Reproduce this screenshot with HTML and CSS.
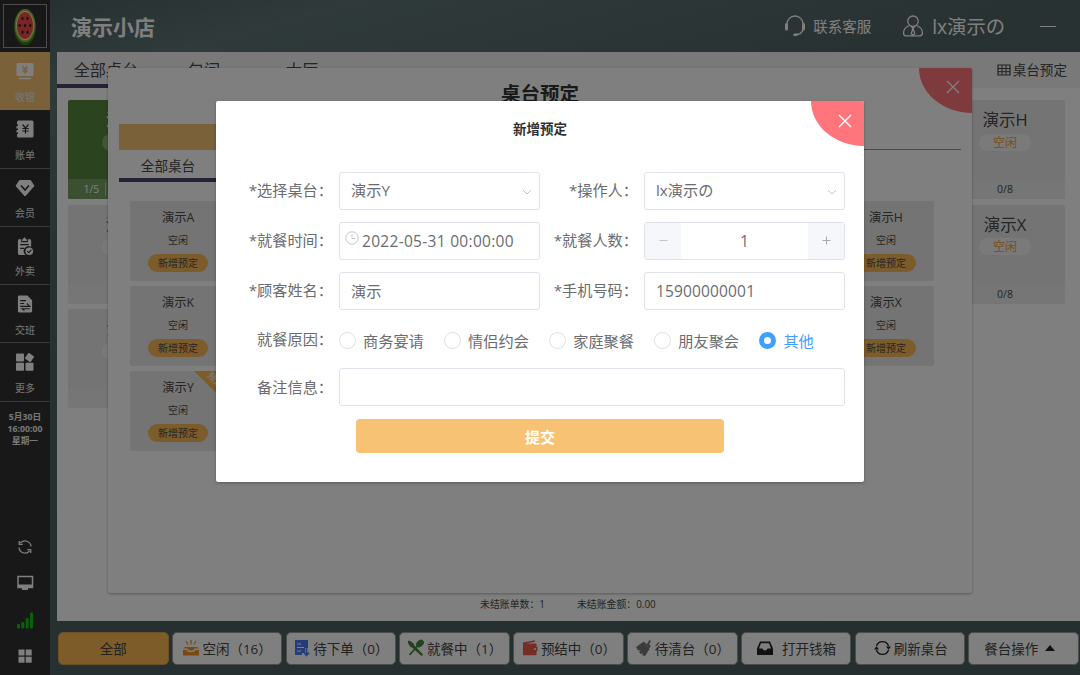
FILE: index.html
```html
<!DOCTYPE html>
<html lang="zh-CN">

<head>
    <meta charset="UTF-8">
    <meta name="viewport" content="width=device-width, initial-scale=1.0">
    <title>演示小店</title>
    <link rel="stylesheet" href="styles.css">
</head>

<body>
    <div class="app">
        <aside class="sidebar">
            <div class="logo">
                <svg width="40" height="40" viewBox="0 0 40 40">
                    <ellipse cx="20" cy="21" rx="11" ry="18" fill="#3f7a16" />
                    <ellipse cx="20" cy="19.5" rx="10.3" ry="16.5" fill="#8fbf45" />
                    <ellipse cx="20" cy="19.5" rx="9" ry="14.5" fill="#fff0c8" />
                    <ellipse cx="20" cy="19.5" rx="8.2" ry="13.5" fill="#f04c46" />
                    <g fill="#222">
                        <ellipse cx="17.5" cy="12.5" rx="1" ry="1.7" />
                        <ellipse cx="22.5" cy="12.5" rx="1" ry="1.7" />
                        <ellipse cx="14.7" cy="19.5" rx="1.3" ry="1.3" />
                        <ellipse cx="20" cy="19.5" rx="1.1" ry="1.5" />
                        <ellipse cx="25.3" cy="19.5" rx="1.3" ry="1.3" />
                        <ellipse cx="17.5" cy="26.2" rx="1" ry="1.7" />
                        <ellipse cx="22.5" cy="26.2" rx="1" ry="1.7" />
                    </g>
                </svg>
            </div>
            <nav class="menu">
                <a class="menu-item active">
                    <svg width="18" height="18" viewBox="0 0 18 18">
                        <rect x="0.5" y="1" width="17" height="13" rx="1.5" fill="#fff" />
                        <path d="M3 16.5h12" stroke="#fff" stroke-width="1.5" />
                        <path d="M6.5 4l2.5 3 2.5-3M6.3 7.3h5.4M6.3 9.5h5.4M9 7v5" fill="none" stroke="#f7c274" stroke-width="1.3" />
                    </svg>
                    <span>收银</span>
                </a>
                <a class="menu-item">
                    <svg width="18" height="18" viewBox="0 0 18 18">
                        <path d="M2.5 0.5h13.5a1.5 1.5 0 0 1 1.5 1.5v14a1.5 1.5 0 0 1-1.5 1.5H2.5a1.5 1.5 0 0 1-1.5-1.5v-2h1v-1.5H0.5V10H2V8.5H.5V6H2V4.5H1V2a1.5 1.5 0 0 1 1.5-1.5z" fill="#fff" />
                        <path d="M6.5 4.5L9.5 8l3-3.5M6.3 8.5h6.4M6.3 11h6.4M9.5 8v5.5" fill="none" stroke="#303030" stroke-width="1.2" />
                    </svg>
                    <span>账单</span>
                </a>
                <a class="menu-item">
                    <svg width="20" height="18" viewBox="0 0 20 18">
                        <path d="M4.5 1.5h11L19 7l-9 10L1 7z" fill="#fff" stroke="#fff" stroke-linejoin="round" />
                        <path d="M6 6.5l4 4.5 4-4.5" fill="none" stroke="#303030" stroke-width="1.6" />
                    </svg>
                    <span>会员</span>
                </a>
                <a class="menu-item">
                    <svg width="20" height="20" viewBox="0 0 18 19">
                        <path d="M3 2.5h2v3h7v-3h2a1.5 1.5 0 0 1 1.5 1.5v6.5a5 5 0 0 0-5.7 8.5H3A1.5 1.5 0 0 1 1.5 17.5V4A1.5 1.5 0 0 1 3 2.5z" fill="#fff" />
                        <path d="M6 3L8.5 0.3 11 3v1.2H6z" fill="#fff" />
                        <circle cx="13.5" cy="15" r="4" fill="#fff" />
                        <path d="M4 8h9M4 12h4M11.3 15l1.7 1.6 2.7-3" fill="none" stroke="#303030" stroke-width="1.2" />
                    </svg>
                    <span>外卖</span>
                </a>
                <a class="menu-item">
                    <svg width="18" height="19" viewBox="0 0 18 19">
                        <path d="M3 0.5h8.5L16.5 5.5V17a1.5 1.5 0 0 1-1.5 1.5H3A1.5 1.5 0 0 1 1.5 17V2A1.5 1.5 0 0 1 3 .5z" fill="#fff" />
                        <path d="M4 6h6M4 9h4M4 12h10l-3-3M14 14.5H6l2.5 2" fill="none" stroke="#303030" stroke-width="1.2" />
                    </svg>
                    <span>交班</span>
                </a>
                <a class="menu-item">
                    <svg width="18" height="18" viewBox="0 0 18 18" fill="#fff">
                        <rect x="0" y="0.5" width="8" height="8" rx="0.8" />
                        <rect x="0" y="9.7" width="8" height="8" rx="0.8" />
                        <rect x="9.5" y="9.7" width="8" height="8" rx="0.8" />
                        <rect x="10" y="1" width="7" height="7" rx="0.8" transform="rotate(35 13.5 4.5)" />
                    </svg>
                    <span>更多</span>
                </a>
            </nav>
            <div class="clock">5月30日<br>16:00:00<br>星期一</div>
            <div class="tools">
                <svg width="16" height="16" viewBox="0 0 16 16" fill="none" stroke="#fff" stroke-width="1.3">
                    <path d="M3.5 4A6 6 0 0 1 14 7.5M12.5 12A6 6 0 0 1 2 8.5" />
                    <path d="M2.3 2v3.3h3.4M13.7 14v-3.3h-3.4" />
                </svg>
                <svg width="18" height="16" viewBox="0 0 18 16">
                    <path d="M2 1.5h14.5v11H2z" fill="none" stroke="#fff" stroke-width="1.5" />
                    <path d="M2 9.5h14.5v3H2zM6 13h6v2H6z" fill="#fff" />
                </svg>
                <svg width="16" height="17" viewBox="0 0 16 17" fill="#0fc40f">
                    <rect x="0" y="12" width="3" height="4.5" rx="1" />
                    <rect x="4.3" y="10" width="3" height="6.5" rx="1" />
                    <rect x="8.6" y="6" width="3" height="10.5" rx="1" />
                    <rect x="13" y="0.5" width="3" height="16" rx="1" />
                </svg>
                <svg width="14" height="14" viewBox="0 0 14 14" fill="#fff">
                    <rect x="0.5" y="0.5" width="6" height="6" />
                    <rect x="7.7" y="0.5" width="6" height="6" />
                    <rect x="0.5" y="7.7" width="6" height="6" />
                    <rect x="7.7" y="7.7" width="6" height="6" />
                </svg>
            </div>
        </aside>

        <div class="main">
            <header class="header">
                <h1 class="shop-name">演示小店</h1>
                <div class="service">
                    <svg width="22" height="22" viewBox="0 0 22 22" fill="none" stroke="#fff">
                        <path d="M3 9a8 8 0 0 1 16 0M19 13c0 3-2 6-6 6.5" stroke-width="1.3" />
                        <path d="M2.5 9.5v4.5M19.5 9.5v4.5" stroke-width="3" stroke-linecap="round" />
                        <path d="M10.5 19.7h2" stroke-width="2.5" stroke-linecap="round" />
                    </svg>
                    <span>联系客服</span>
                </div>
                <div class="user">
                    <svg width="22" height="22" viewBox="0 0 22 22" fill="none" stroke="#fff" stroke-width="1.3">
                        <circle cx="11" cy="6.2" r="5.2" />
                        <path d="M7.5 10.5C3.5 12 1.5 15 1.5 18c0 2 .8 2.8 2.5 2.8h14c1.7 0 2.5-.8 2.5-2.8 0-3-2-6-6-7.5" />
                        <path d="M9 11l2 2.5 2-2.5M11 13.5l-1.8 5 1.8 2 1.8-2z" />
                    </svg>
                    <span>lx演示の</span>
                </div>
                <span class="minimize"></span>
            </header>

            <section class="board">
                <div class="tabs">
                    <span class="tab active">全部桌台</span>
                    <span class="tab">包间</span>
                    <span class="tab">大厅</span>
                    <span class="reserve">
                        <svg width="14" height="12" viewBox="0 0 14 12" fill="none" stroke="#444">
                            <path d="M1 1h12v10H1z" stroke-width="1.2" />
                            <path d="M1 4.5h12M1 7.7h12M5 1v10M9 1v10" />
                        </svg>桌台预定</span>
                </div>
                <div class="tables">
                    <div class="table busy">
                        <div class="table-name">演示A</div>
                        <span class="state"></span>
                        <div class="seats"><span>1/5</span><i></i></div>
                    </div>
                    <div class="table last-col">
                        <div class="table-name">演示H</div>
                        <span class="state">空闲</span>
                        <div class="seats">0/8</div>
                    </div>
                    <div class="table">
                        <div class="table-name">演示K</div>
                        <span class="state"></span>
                        <div class="seats"></div>
                    </div>
                    <div class="table last-col">
                        <div class="table-name">演示X</div>
                        <span class="state">空闲</span>
                        <div class="seats">0/8</div>
                    </div>
                    <div class="table">
                        <div class="table-name">演示Y</div>
                        <span class="state"></span>
                        <div class="seats"></div>
                    </div>
                </div>
                <div class="summary">
                    <span>未结账单数：1</span>
                    <span>未结账金额：0.00</span>
                </div>
            </section>

            <footer class="filters">
                <button class="filter active">全部</button>
                <button class="filter">
                    <svg width="18" height="18" viewBox="0 0 18 18">
                        <path d="M1 9.5l2-1.5h12l2 1.5H12.5c-.5 3-6.5 3-7 0zM1 11h3.5c1.5 3 7.5 3 9 0H17v5.5H1z" fill="#f0962d" />
                        <path d="M9 1v4.5M4 2l2 3.5M14 2l-2 3.5" stroke="#f0962d" stroke-width="1.3" />
                    </svg>空闲（16）</button>
                <button class="filter">
                    <svg width="18" height="18" viewBox="0 0 18 18">
                        <path d="M2 1h13v8h-3v5H9v2H2z" fill="#4a7bee" />
                        <path d="M4 5h4M4 8.5h7M4 12h4" stroke="#fff" stroke-width="1.2" />
                        <path d="M13.5 9v6M11 13.5l2.5 3 2.5-3" fill="none" stroke="#4a7bee" stroke-width="1.6" />
                    </svg>待下单（0）</button>
                <button class="filter">
                    <svg width="18" height="18" viewBox="0 0 18 18">
                        <path d="M1 2c1-.8 5 .5 6.5 4.500L16 15.500 14.500 17 5 8.500C3 8 .5 4.500 1 2z" fill="#458638" />
                        <ellipse cx="13" cy="4.500" rx="4.400" ry="3.200" transform="rotate(-45 13 4.500)" fill="#458638" />
                        <path d="M10.500 7L2.500 16" stroke="#458638" stroke-width="1.800" />
                    </svg>就餐中（1）</button>
                <button class="filter">
                    <svg width="18" height="18" viewBox="0 0 18 18">
                        <path d="M2 3.500L14 1.300v1.500L5 4.500h10.500v11.700H2z" fill="#e85d4e" />
                        <rect x="11.500" y="7.500" width="5" height="5" rx="1" fill="#e85d4e" />
                        <circle cx="14" cy="10" r="1" fill="#fff" />
                    </svg>预结中（0）</button>
                <button class="filter">
                    <svg width="18" height="18" viewBox="0 0 18 18" fill="#777">
                        <path d="M1 8l8-5.500L14.500 10 10 17l-3-1 1-2-2.500 1L4 13l1.500-2L3 11.500z" />
                        <path d="M10 3.500l2 1.500L14.500 1 16 2l-2 3.500L16 7l-2 2.500z" />
                    </svg>待清台（0）</button>
                <button class="filter">
                    <svg class="wide" width="18" height="18" viewBox="0 0 18 18">
                        <path d="M4 2.500h10l3 7V16H1V9.500z" fill="#222" />
                        <path d="M5 4.200h8l2 5.300h-3.500c-.5 2.500-4.500 2.500-5 0H3z" fill="#fff" />
                    </svg>打开钱箱</button>
                <button class="filter refresh">
                    <svg width="17" height="18" viewBox="0 0 17 18">
                        <path d="M2.500 7A6.300 6.300 0 0 1 14.500 7M14.500 11A6.300 6.300 0 0 1 2.500 11" fill="none" stroke="#222" stroke-width="1.400" />
                        <path d="M0 10.500h5L2.500 7.200zM12 7.500h5l-2.500 3.300z" fill="#222" />
                    </svg>刷新桌台</button>
                <button class="filter more">餐台操作<i class="caret"></i></button>
            </footer>
        </div>
    </div>

    <!-- 桌台预定 -->
    <div class="dialog booking">
        <span class="close">
            <svg width="14" height="14" viewBox="0 0 14 14"><path d="M1 1l12 12M13 1L1 13" stroke="#fff" stroke-width="1.4" /></svg>
        </span>
        <h2 class="booking-title">桌台预定</h2>
        <div class="booking-bar"><span></span></div>
        <div class="booking-tab">全部桌台</div>
        <div class="booking-grid">
            <div class="slot"><b>演示A</b><span>空闲</span><em>新增预定</em></div>
            <div class="slot last-col"><b>演示H</b><span>空闲</span><em>新增预定</em></div>
            <div class="slot"><b>演示K</b><span>空闲</span><em>新增预定</em></div>
            <div class="slot last-col"><b>演示X</b><span>空闲</span><em>新增预定</em></div>
            <div class="slot"><i class="ribbon"><u>预定</u></i><b>演示Y</b><span>空闲</span><em>新增预定</em></div>
        </div>
    </div>

    <div class="mask"></div>

    <!-- 新增预定 -->
    <div class="dialog reserve-form">
        <span class="close">
            <svg width="14" height="14" viewBox="0 0 14 14"><path d="M1 1l12 12M13 1L1 13" stroke="#fff" stroke-width="1.4" /></svg>
        </span>
        <h3 class="form-title">新增预定</h3>
        <div class="form">
            <label>*选择桌台：</label>
            <div class="input">演示Y<svg class="arrow" width="10" height="6" viewBox="0 0 10 6"><path d="M1 1l4 4 4-4" fill="none" stroke="#c0c4cc" /></svg></div>
            <label>*操作人：</label>
            <div class="input">lx演示の<svg class="arrow" width="10" height="6" viewBox="0 0 10 6"><path d="M1 1l4 4 4-4" fill="none" stroke="#c0c4cc" /></svg></div>

            <label>*就餐时间：</label>
            <div class="input date">
                <svg width="14" height="14" viewBox="0 0 14 14" fill="none" stroke="#c0c4cc"><circle cx="7" cy="7" r="6.2" /><path d="M7 3v4.5h3.5" /></svg>
                <span>2022-05-31 00:00:00</span>
            </div>
            <label>*就餐人数：</label>
            <div class="input number">
                <span class="step"><svg width="9" height="9" viewBox="0 0 9 9"><path d="M0.5 4.5h8" stroke="#c0c4cc" /></svg></span>
                <span class="count">1</span>
                <span class="step"><svg width="9" height="9" viewBox="0 0 9 9"><path d="M0.5 4.5h8M4.5 .5v8" stroke="#a8abb2" /></svg></span>
            </div>

            <label>*顾客姓名：</label>
            <div class="input">演示</div>
            <label>*手机号码：</label>
            <div class="input digits">15900000001</div>

            <label class="reason">就餐原因：</label>
            <div class="radios">
                <span class="radio"><i></i>商务宴请</span>
                <span class="radio"><i></i>情侣约会</span>
                <span class="radio"><i></i>家庭聚餐</span>
                <span class="radio"><i></i>朋友聚会</span>
                <span class="radio checked"><i></i>其他</span>
            </div>

            <label class="remark-label">备注信息：</label>
            <div class="input remark"></div>
        </div>
        <button class="submit">提交</button>
    </div>
</body>

</html>
```
FILE: styles.css
```css
* {
    box-sizing: border-box;
}

body {
    margin: 0;
    width: 1080px;
    height: 675px;
    overflow: hidden;
    font-family: "Open Sans", "Noto Sans CJK SC", sans-serif;
    color: #4a4a4a;
}

svg {
    display: block;
    flex: none;
}

i, em, u {
    font-style: normal;
    text-decoration: none;
}

.app {
    display: flex;
    height: 675px;
    background: linear-gradient(165deg, #4d5f5f 0%, #5f7474 10%, #526464 30%, #4c5e5e 100%);
}

/* 左侧菜单 */
.sidebar {
    width: 50px;
    display: flex;
    flex-direction: column;
    background: #303030;
    color: #eee;
}

.logo {
    width: 44px;
    height: 44px;
    margin: 4px 3px;
    border: 1px solid #999;
    padding: 1px;
}

.menu-item {
    height: 58.3px;
    display: flex;
    flex-direction: column;
    align-items: center;
    padding-top: 10px;
    font-size: 10px;
    line-height: 14px;
    border-bottom: 1px solid #777;
}

.menu-item svg {
    height: 18px;
}

.menu-item span {
    margin-top: 9.5px;
}

.menu-item.active {
    background: #f7c274;
    border-bottom-color: #f7c274;
}

.clock {
    margin-top: 9px;
    text-align: center;
    font-size: 8.7px;
    font-weight: bold;
    line-height: 12px;
}

.tools {
    flex: 1;
    display: flex;
    flex-direction: column;
    align-items: center;
    justify-content: flex-end;
    gap: 20.5px;
    padding-bottom: 12px;
}

/* 顶部 */
.main {
    flex: 1;
    padding-left: 7px;
    display: flex;
    flex-direction: column;
}

.header {
    height: 52px;
    display: flex;
    align-items: center;
    padding: 0 24px 0 14px;
    color: #fff;
}

.shop-name {
    margin: 1px auto 0 0;
    font-size: 21px;
    line-height: 30px;
}

.service,
.user {
    display: flex;
    align-items: center;
}

.service span {
    margin-top: -2px;
}

.service {
    font-size: 14.5px;
    gap: 7px;
    margin-right: 31px;
}

.user {
    font-size: 19.3px;
    gap: 8px;
    margin-right: 35px;
}

.minimize {
    width: 16px;
    height: 1px;
    background: #fff;
}

/* 桌台 */
.board {
    height: 569px;
    background: #fff;
    display: flex;
    flex-direction: column;
}

.tabs {
    height: 36px;
    display: flex;
    background: #f3f3f3;
    font-size: 16.2px;
    line-height: 37px;
}

.tab {
    width: 98px;
    text-align: center;
}

.tab.active {
    border-bottom: 4px solid #4a4566;
}

.reserve {
    margin-left: auto;
    margin-right: 13px;
    height: 35px;
    display: flex;
    align-items: center;
    gap: 2px;
    font-size: 13.6px;
}

.tables {
    flex: 1;
    display: grid;
    grid-template-columns: repeat(8, 1fr);
    grid-auto-rows: 99.3px;
    gap: 5.3px;
    padding: 12px 15px 0 10.5px;
}

.last-col {
    grid-column: 8;
}

.table {
    display: flex;
    flex-direction: column;
    align-items: center;
    background: #e9e9e9;
    border-radius: 2px;
    overflow: hidden;
}

.table-name {
    margin-top: 7px;
    font-size: 16.5px;
    line-height: 26px;
}

.state {
    width: 52px;
    height: 17px;
    margin-top: 0.5px;
    border-radius: 9px;
    background: #f4f4f4;
    color: #f0a030;
    font-size: 12px;
    line-height: 17px;
    text-align: center;
}

.seats {
    width: 100%;
    height: 20px;
    margin-top: auto;
    background: #ececec;
    font-size: 10.5px;
    line-height: 21px;
    text-align: center;
}

.busy {
    background: #56883f;
    color: #fff;
}

.busy .state {
    background: #83ab72;
}

.busy .seats {
    display: flex;
    align-items: center;
    padding-left: 16px;
    gap: 6px;
    background: #74a062;
}

.busy .seats i {
    width: 1px;
    height: 14px;
    background: #b8d0ae;
}

.summary {
    display: flex;
    gap: 32px;
    padding: 0 0 9px 423px;
    font-size: 9.9px;
    line-height: 16px;
}

/* 底部按钮 */
.filters {
    display: grid;
    grid-template-columns: repeat(9, 1fr);
    gap: 3.1px;
    padding: 11px 1px 0 1px;
}

.filter {
    height: 33px;
    display: flex;
    align-items: center;
    justify-content: center;
    gap: 2px;
    padding: 0 0 2px;
    border: 1px solid #999;
    border-radius: 5px;
    background: #fff;
    color: #444;
    font-family: inherit;
    font-size: 13.5px;
    white-space: nowrap;
}

.filter.active {
    background: #fbb852;
    border-color: #d9a04a;
}

.filter .wide {
    margin-right: 6px;
}

.filter.refresh {
    gap: 3px;
    padding-left: 2px;
}

.filter.more {
    padding-right: 8px;
}

.caret {
    margin-left: 5px;
    border: 5px solid transparent;
    border-top: 0;
    border-bottom: 6px solid #222;
}

/* 弹窗 */
.dialog {
    position: absolute;
    background: #fff;
    border-radius: 2px;
    overflow: hidden;
    box-shadow: 0 1px 3px rgba(0, 0, 0, 0.3);
}

.close {
    position: absolute;
    top: 0;
    right: 0;
    width: 53px;
    height: 45px;
    background: #ff757b;
    border-bottom-left-radius: 53px 45px;
    display: flex;
    align-items: center;
    justify-content: center;
    padding: 0 0 6px 15px;
}

.booking {
    left: 108px;
    top: 67.5px;
    width: 864px;
    height: 525.5px;
    padding: 0 11px;
}

.booking-title {
    margin: 11px 0 15px;
    font-size: 19.5px;
    line-height: 30px;
    text-align: center;
    color: #333;
}

.booking-bar {
    height: 26.5px;
    border-bottom: 1px solid #999;
}

.booking-bar span {
    display: block;
    width: 210px;
    height: 26px;
    background: #f7c274;
}

.booking-tab {
    width: 98px;
    height: 32px;
    border-bottom: 4px solid #4a4566;
    font-size: 13.6px;
    line-height: 32px;
    text-align: center;
}

.booking-grid {
    display: grid;
    grid-template-columns: repeat(8, 1fr);
    grid-auto-rows: 80px;
    gap: 5px;
    padding: 19px 27px 0 11px;
}

.slot {
    position: relative;
    display: flex;
    flex-direction: column;
    align-items: center;
    background: #e9e9e9;
    border-radius: 2px;
    font-size: 10px;
    line-height: 16px;
}

.slot b {
    margin: 8px 0 4.5px;
    font-size: 12.3px;
    font-weight: normal;
    line-height: 18px;
}

.slot em {
    width: 60px;
    height: 18px;
    margin-top: 6px;
    border-radius: 9px;
    background: #f7b955;
    line-height: 18px;
    text-align: center;
}

.ribbon {
    position: absolute;
    top: 0;
    right: 0;
    width: 32px;
    height: 32px;
    background: #f7b955;
    clip-path: polygon(0 0, 100% 0, 100% 100%);
    color: #fff;
}

.ribbon u {
    display: block;
    transform: rotate(45deg);
    margin: 3px 0 0 12px;
    width: 20px;
    font-size: 9px;
    line-height: 14px;
}

.mask {
    position: absolute;
    top: 0;
    left: 0;
    width: 1080px;
    height: 675px;
    background: rgba(0, 0, 0, 0.5);
}

/* 新增预定表单 */
.reserve-form {
    left: 216px;
    top: 101px;
    width: 648px;
    height: 381px;
}

.form-title {
    margin: 18px 0 32px;
    font-size: 13.5px;
    line-height: 21px;
    text-align: center;
    color: #303133;
}

.form {
    display: grid;
    grid-template-columns: 117px 201px 92px 201px;
    grid-template-rows: 37.5px 37.5px 37.5px 33px 38px;
    row-gap: 12.7px;
    column-gap: 6px;
    align-items: center;
    font-size: 15.2px;
    color: #6a6c70;
}

.form label {
    padding-bottom: 4px;
    text-align: right;
    white-space: nowrap;
}

.input {
    height: 100%;
    display: flex;
    align-items: center;
    padding: 0 7px 3px 11px;
    border: 1px solid #dfe2ea;
    border-radius: 3px;
}

.arrow {
    margin: 6px 0 0 auto;
}

.date {
    padding: 0 0 0 5px;
    gap: 3px;
}

.date svg {
    margin-bottom: 5px;
}

.date span,
.digits,
.count {
    font-size: 15.5px;
    letter-spacing: 0.3px;
}

.digits {
    padding-bottom: 0;
    letter-spacing: 0.15px;
}

.number {
    padding: 0;
    overflow: hidden;
}

.step {
    width: 36px;
    height: 100%;
    display: flex;
    align-items: center;
    justify-content: center;
    background: #f5f7fa;
}

.count {
    flex: 1;
    text-align: center;
}

.radios {
    grid-column: 2 / 5;
    display: flex;
    padding-top: 2px;
}

.form .reason {
    padding-bottom: 3px;
}

.form .remark-label {
    padding-bottom: 2px;
}

.radio {
    flex: none;
    width: 105.1px;
    display: flex;
    align-items: center;
    gap: 7px;
    white-space: nowrap;
}

.radio i {
    width: 17px;
    height: 17px;
    border: 1px solid #dcdfe6;
    border-radius: 50%;
}

.radio.checked {
    width: auto;
    color: #409eff;
}

.radio.checked i {
    border: 5px solid #409eff;
}

.remark {
    grid-column: 2 / 5;
}

.submit {
    display: block;
    width: 368px;
    height: 34px;
    margin: 13px 0 0 140px;
    padding: 0;
    border: 0;
    border-radius: 4px;
    background: #f7c274;
    color: #fff;
    font-family: inherit;
    font-size: 15px;
    font-weight: bold;
}
```
